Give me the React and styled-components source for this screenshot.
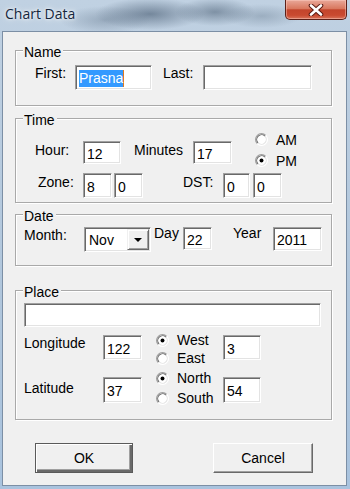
import React from 'react';
import styled, { createGlobalStyle } from 'styled-components';

const GlobalStyle = createGlobalStyle`
  html, body { margin: 0; padding: 0; }
  body {
    width: 350px;
    height: 489px;
    overflow: hidden;
    font-family: 'Liberation Sans', Arial, sans-serif;
  }
`

const Window = styled.div`
  width: 350px;
  height: 489px;
  box-sizing: border-box;
  display: flex;
  flex-direction: column;
  padding: 0 3px 3px 2px;
  background:
    radial-gradient(ellipse 55px 16px at 150px 14px, rgba(55, 75, 98, .55), transparent),
    radial-gradient(ellipse 40px 14px at 215px 12px, rgba(62, 82, 104, .5), transparent),
    radial-gradient(ellipse 45px 14px at 105px 20px, rgba(80, 100, 122, .35), transparent),
    radial-gradient(ellipse 40px 12px at 262px 16px, rgba(90, 110, 130, .35), transparent),
    linear-gradient(180deg, #c0d1e2 0%, #b0c6dc 60%, #a9c3de 100%);
`

const TitleBar = styled.div`
  height: 31px;
  flex: none;
  display: flex;
  justify-content: space-between;
  align-items: flex-start;
`

const Title = styled.span`
  padding: 5px 0 0 3px;
  font-family: 'Open Sans', 'Noto Sans', sans-serif;
  font-size: 14px;
  line-height: 18px;
  color: #14263c;
  text-shadow: 0 0 6px rgba(255, 255, 255, .9), 0 0 3px rgba(255, 255, 255, .9);
`

const CloseButton = styled.div`
  width: 62px;
  height: 20px;
  box-sizing: border-box;
  display: flex;
  align-items: center;
  justify-content: center;
  border: 1px solid #5c2018;
  border-top: none;
  border-radius: 0 0 5px 5px;
  background: linear-gradient(180deg, #e9a899 0%, #d9785f 45%, #c3452c 52%, #c94a30 80%, #d8735a 100%);
  box-shadow: inset 0 0 0 1px rgba(255, 210, 200, .45);
`

const Client = styled.div`
  flex: 1;
  background: #f0f0f0;
  border: 1px solid #7c8fa5;
  padding: 18px 0 0 12px;
  display: flex;
  flex-direction: column;
`

const Group = styled.div`
  position: relative;
  width: 317px;
  height: ${(p) => p.$h}px;
  box-sizing: border-box;
  margin-top: ${(p) => p.$mt || 0}px;
  padding: ${(p) => p.$pad || '0'};
  border: 1px solid #a9a9a9;
  box-shadow: inset 1px 1px 0 #fff, 1px 1px 0 #fff;
`

const Caption = styled.span`
  position: absolute;
  top: -6px;
  left: 7px;
  padding: 0 2px 0 1px;
  background: #f0f0f0;
  font-size: 14px;
  line-height: 14px;
  color: #000;
`

const Row = styled.div`
  display: flex;
  align-items: flex-start;
  margin-top: ${(p) => p.$mt || 0}px;
  padding-left: ${(p) => p.$pl || 0}px;
`

const Label = styled.span`
  flex: none;
  width: ${(p) => p.$w}px;
  margin-left: ${(p) => p.$ml || 0}px;
  margin-top: ${(p) => p.$mt || 0}px;
  font-size: 14px;
  line-height: 16px;
  color: #000;
  white-space: nowrap;
`

const TextBox = styled.div`
  flex: none;
  width: ${(p) => p.$w}px;
  height: ${(p) => p.$h || 25}px;
  margin-left: ${(p) => p.$ml || 0}px;
  margin-top: ${(p) => p.$mt || 0}px;
  box-sizing: border-box;
  display: flex;
  align-items: center;
  padding: 2px 2px 0 3px;
  background: #fff;
  border: 1px solid;
  border-color: #a0a0a0 #fff #fff #a0a0a0;
  box-shadow: inset 1px 1px 0 #696969, inset -1px -1px 0 #e3e3e3;
  font-size: 14px;
  line-height: 16px;
  color: #000;
  white-space: nowrap;
`

const Selected = styled.span`
  background: #3399ff;
  color: #fff;
  line-height: 17px;
  border-right: 1px solid #e07a20;
`

const Select = styled(TextBox)`
  justify-content: space-between;
  padding: 2px 1px 1px 4px;
`

const DropButton = styled.div`
  width: 22px;
  height: 21px;
  box-sizing: border-box;
  align-self: flex-end;
  display: flex;
  align-items: center;
  justify-content: center;
  background: #f0f0f0;
  border: 1px solid;
  border-color: #f0f0f0 #696969 #696969 #f0f0f0;
  box-shadow: inset 1px 1px 0 #fff, inset -1px -1px 0 #a0a0a0;

  &::after {
    content: '';
    border-left: 4px solid transparent;
    border-right: 4px solid transparent;
    border-top: 4px solid #000;
  }
`

const RadioCol = styled.div`
  flex: none;
  display: flex;
  flex-direction: column;
  width: ${(p) => p.$w || 'auto'}${(p) => (p.$w ? 'px' : '')};
  margin-left: ${(p) => p.$ml || 0}px;
`

const RadioItem = styled.div`
  display: flex;
  align-items: center;
  height: ${(p) => p.$h}px;
  gap: 8px;
  font-size: 14px;
  line-height: 16px;
  color: #000;
`

const ButtonRow = styled.div`
  display: flex;
  gap: 80px;
  margin-top: 23px;
  padding-left: 20px;
`

const PushButton = styled.div`
  width: ${(p) => p.$w}px;
  height: 30px;
  box-sizing: border-box;
  display: flex;
  align-items: center;
  justify-content: center;
  background: #f0f0f0;
  font-size: 14px;
  color: #000;
  border: 1px solid;
  border-color: ${(p) => (p.$default ? '#5a5a5a' : '#fff #696969 #696969 #fff')};
  box-shadow: ${(p) =>
    p.$default
      ? 'inset 1px 1px 0 #fff, inset -2px -2px 0 #696969, inset -3px -3px 0 #a0a0a0'
      : 'inset -1px -1px 0 #a0a0a0'};
`

function Radio({ checked }) {
  return (
    <svg width="13" height="13" viewBox="0 0 12 12">
      <circle cx="6" cy="6" r="5.5" fill="#fff" />
      <path d="M2.11 9.89 A5.5 5.5 0 0 1 9.89 2.11" fill="none" stroke="#a0a0a0" strokeWidth="1" />
      <path d="M9.89 2.11 A5.5 5.5 0 0 1 2.11 9.89" fill="none" stroke="#fff" strokeWidth="1" />
      <path d="M2.82 9.18 A4.5 4.5 0 0 1 9.18 2.82" fill="none" stroke="#696969" strokeWidth="1" />
      <path d="M9.18 2.82 A4.5 4.5 0 0 1 2.82 9.18" fill="none" stroke="#e3e3e3" strokeWidth="1" />
      {checked && <circle cx="6" cy="6" r="1.8" fill="#000" />}
    </svg>
  )
}

function RadioOption({ label, checked, h }) {
  return (
    <RadioItem $h={h}>
      <Radio checked={checked} />
      <span>{label}</span>
    </RadioItem>
  )
}

function CloseGlyph() {
  return (
    <svg width="16" height="12" viewBox="0 0 16 12">
      <path d="M3 1.5 L13 10.5 M13 1.5 L3 10.5" stroke="#5a1a12" strokeWidth="4.6" strokeLinecap="round" />
      <path d="M3 1.5 L13 10.5 M13 1.5 L3 10.5" stroke="#fff" strokeWidth="2.6" strokeLinecap="round" />
    </svg>
  )
}

export default function App() {
  return (
    <>
      <GlobalStyle />
      <Window>
        <TitleBar>
          <Title>Chart Data</Title>
          <CloseButton><CloseGlyph /></CloseButton>
        </TitleBar>

        <Client>
          <Group $h={56} $pad="14px 0 0 19px">
            <Caption>Name</Caption>
            <Row>
              <Label $w={40}>First:</Label>
              <TextBox $w={77}><Selected>Prasna</Selected></TextBox>
              <Label $w={40} $ml={11}>Last:</Label>
              <TextBox $w={109} />
            </Row>
          </Group>

          <Group $h={85} $mt={12} $pad="10px 0 0 19px">
            <Caption>Time</Caption>
            <Row>
              <Label $w={48} $mt={13}>Hour:</Label>
              <TextBox $w={38} $h={23} $mt={12}>12</TextBox>
              <Label $w={59} $ml={13} $mt={13}>Minutes</Label>
              <TextBox $w={39} $h={23} $mt={12}>17</TextBox>
              <RadioCol $ml={23}>
                <RadioOption label="AM" h={21} />
                <RadioOption label="PM" h={21} checked />
              </RadioCol>
            </Row>
            <Row $mt={2} $pl={3}>
              <Label $w={45} $mt={1}>Zone:</Label>
              <TextBox $w={29}>8</TextBox>
              <TextBox $w={29} $ml={2}>0</TextBox>
              <Label $w={40} $ml={40} $mt={1}>DST:</Label>
              <TextBox $w={27}>0</TextBox>
              <TextBox $w={29} $ml={3}>0</TextBox>
            </Row>
          </Group>

          <Group $h={52} $mt={11} $pad="12px 0 0 8px">
            <Caption>Date</Caption>
            <Row>
              <Label $w={60}>Month:</Label>
              <Select $w={67}>
                <span>Nov</span>
                <DropButton />
              </Select>
              <Label $w={29} $ml={3} $mt={-2}>Day</Label>
              <TextBox $w={29} $h={23}>22</TextBox>
              <Label $w={40} $ml={21} $mt={-2}>Year</Label>
              <TextBox $w={49} $h={24}>2011</TextBox>
            </Row>
          </Group>

          <Group $h={130} $mt={24} $pad="12px 0 0 8px">
            <Caption>Place</Caption>
            <TextBox $w={297} $h={24} />
            <Row $mt={4}>
              <Label $w={79} $mt={4}>Longitude</Label>
              <TextBox $w={39} $mt={4}>122</TextBox>
              <RadioCol $ml={14} $w={67}>
                <RadioOption label="West" h={18} checked />
                <RadioOption label="East" h={18} />
              </RadioCol>
              <TextBox $w={38} $mt={4}>3</TextBox>
            </Row>
            <Row $mt={1}>
              <Label $w={79} $mt={12}>Latitude</Label>
              <TextBox $w={39} $h={26} $mt={9}>37</TextBox>
              <RadioCol $ml={14} $w={67}>
                <RadioOption label="North" h={20} checked />
                <RadioOption label="South" h={20} />
              </RadioCol>
              <TextBox $w={38} $h={26} $mt={9}>54</TextBox>
            </Row>
          </Group>

          <ButtonRow>
            <PushButton $w={98} $default>OK</PushButton>
            <PushButton $w={100}>Cancel</PushButton>
          </ButtonRow>
        </Client>
      </Window>
    </>
  )
}
